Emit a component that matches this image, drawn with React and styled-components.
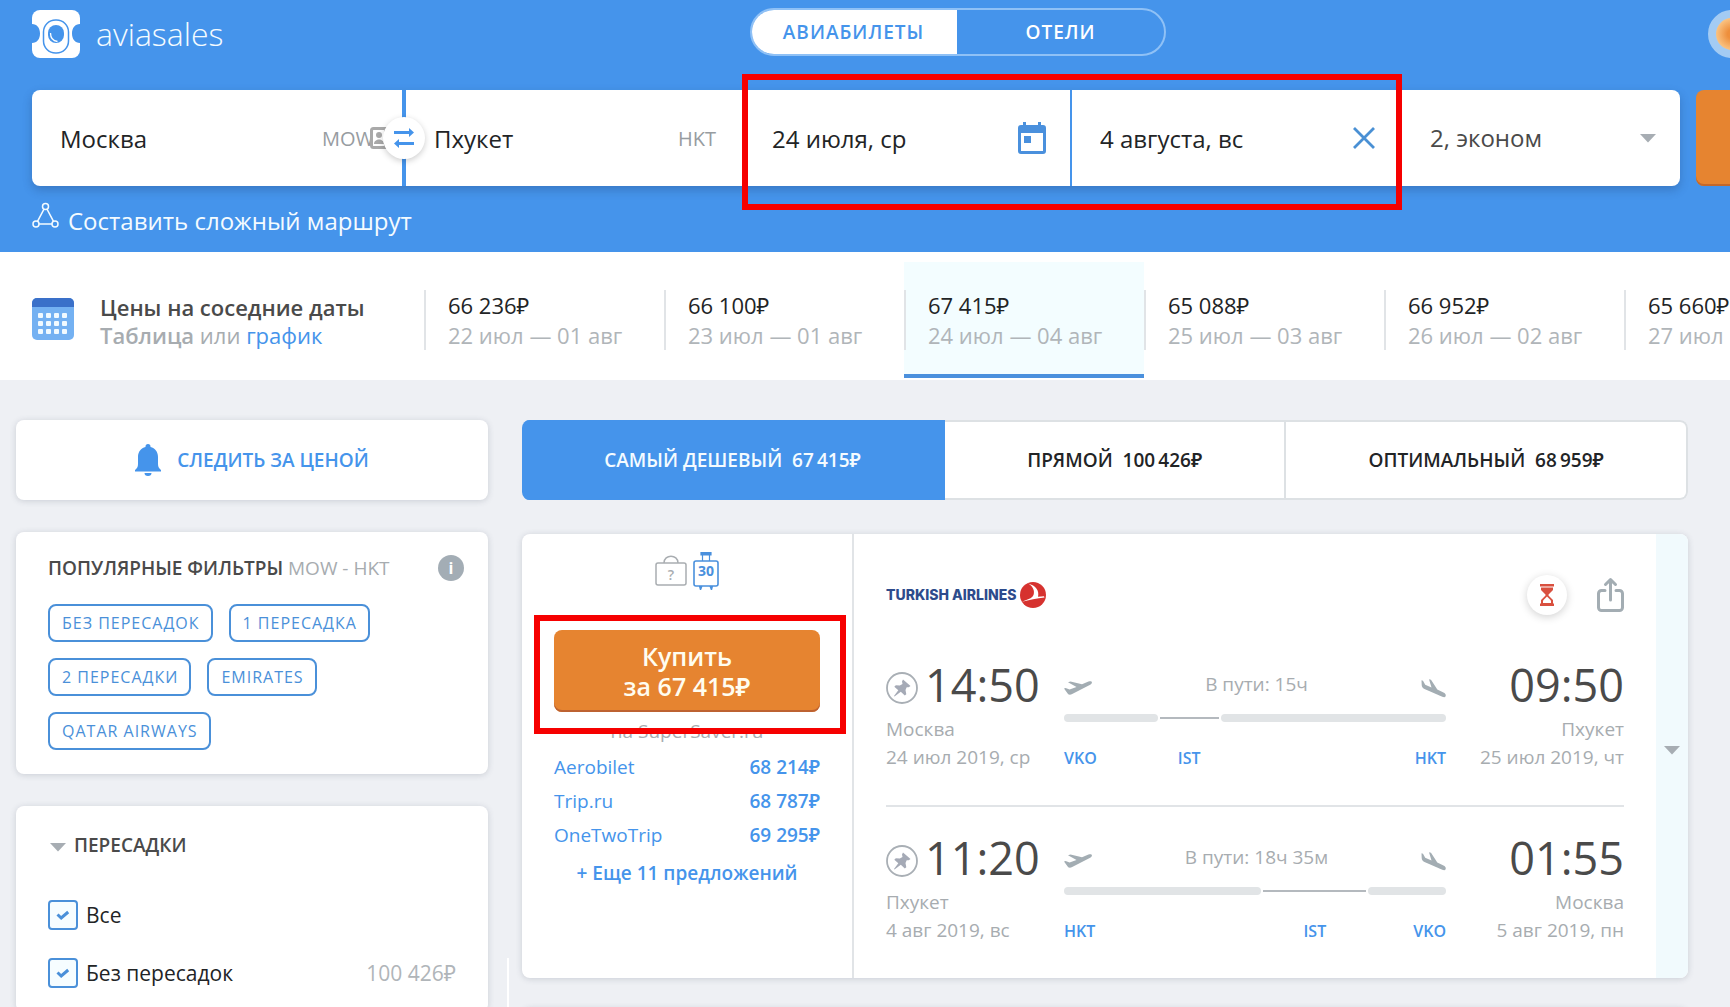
import React from "react";
import styled, { createGlobalStyle, css } from "styled-components";

const blue = "#4594eb";
const ink = "#222426";
const dark = "#4a4a4a";
const grey = "#a7acb0";
const line = "#e1e4e7";
const orange = "#e68430";
const cardShadow = "0 1px 6px rgba(60, 70, 90, 0.2)";

const GlobalStyle = createGlobalStyle`
  *, *::before, *::after { box-sizing: border-box; }
  body {
    margin: 0;
    overflow-x: hidden;
    background: #eef0f4;
    color: ${ink};
    font-family: "Open Sans", "Noto Sans", sans-serif;
    font-size: 19px;
  }
  button, input, select { font: inherit; color: inherit; }
  button { border: 0; padding: 0; background: none; cursor: pointer; }
  a { color: ${blue}; text-decoration: none; }
  h2, p, ul { margin: 0; padding: 0; }
`;

const Page = styled.div`
  overflow: hidden;
  height: 100vh;
`;

/* ---------- header ---------- */

const Header = styled.header`
  background: ${blue};
  padding-bottom: 12px;
`;

const HeaderInner = styled.div`
  width: calc(100% + 186px);
  padding: 0 32px;
`;

const TopBar = styled.div`
  display: grid;
  grid-template-columns: 1fr 416px 1fr;
  align-items: start;
  height: 90px;
  padding-top: 8px;
`;

const Logo = styled.a`
  display: flex;
  align-items: center;
  gap: 16px;
  padding-top: 2px;
  color: #f4fbff;
  font-size: 32px;
  line-height: 48px;
  font-weight: 300;
`;

const ServiceTabs = styled.nav`
  display: flex;
  height: 48px;
  border: 2px solid #8fc1f6;
  border-radius: 24px;
  overflow: hidden;
`;

const ServiceTab = styled.button`
  flex: 1;
  font-size: 19px;
  font-weight: 600;
  letter-spacing: 1px;
  color: ${(p) => (p.$active ? blue : "#fff")};
  background: ${(p) => (p.$active ? "#fff" : "transparent")};
  ${(p) => p.$active && css`margin: -2px 0 -2px -2px;`}
`;

const Avatar = styled.button`
  justify-self: end;
  width: 48px;
  height: 48px;
  margin: 2px 128px 0 0;
  border: 8px solid #a3cbf3;
  border-radius: 50%;
  background: radial-gradient(circle, #ee8f3c 20%, #fbc889 75%);
`;

const SearchForm = styled.form`
  display: flex;
  gap: 16px;
`;

const SearchBar = styled.div`
  flex: 1;
  display: grid;
  grid-template-columns: 370fr 342fr 656fr 280fr;
  height: 96px;
  background: #fff;
  border-radius: 8px;
  box-shadow: 0 4px 10px rgba(30, 60, 110, 0.3);
`;

const Field = styled.div`
  position: relative;
  display: flex;
  align-items: center;
  min-width: 0;
  padding: 0 ${(p) => (p.$icon ? 24 : 28)}px 0 28px;
  border-left: ${(p) => p.$rule || 0}px solid ${blue};
`;

const FieldInput = styled.input`
  flex: 1;
  min-width: 0;
  padding: 2px 0 0;
  border: 0;
  outline: 0;
  background: none;
  font-size: 24px;
  line-height: 40px;
`;

const PaxSelect = styled.select`
  flex: 1;
  padding: 0 2px;
  border: 0;
  appearance: none;
  background: none;
  font-size: 24px;
  line-height: 40px;
  color: ${dark};
`;

const FieldCode = styled.span`
  color: #979ca1;
  font-size: 20px;
`;

const ContactBadge = styled.svg`
  position: absolute;
  right: 12px;
  top: 37px;
`;

const SwapButton = styled.button`
  position: absolute;
  left: -23px;
  top: 27px;
  z-index: 1;
  display: grid;
  place-items: center;
  width: 42px;
  height: 42px;
  border-radius: 50%;
  background: #fff;
  box-shadow: 0 2px 6px rgba(0, 0, 0, 0.2);
`;

const IconButton = styled.button`
  display: flex;
`;

const DateGroup = styled.div`
  position: relative;
  display: grid;
  grid-template-columns: 326fr 330fr;
`;

const Highlight = styled.div`
  position: absolute;
  inset: ${(p) => p.$inset};
  z-index: 2;
  border: 6px solid #f60000;
  pointer-events: none;
`;

const SearchButton = styled.button`
  width: 188px;
  height: 96px;
  border-radius: 8px;
  background: ${orange};
  box-shadow: inset 0 -2px 0 #c4682a;
  color: #fff;
`;

const RouteLink = styled.a`
  display: inline-flex;
  align-items: center;
  gap: 9px;
  margin-top: 16px;
  color: #f4fbff;
  font-size: 24px;
  line-height: 38px;

  svg { margin-bottom: 11px; }
`;

/* ---------- neighbouring dates ---------- */

const PriceStrip = styled.section`
  display: flex;
  height: 128px;
  padding: 10px 0 2px;
  background: #fff;
  overflow: hidden;
`;

const StripIntro = styled.div`
  flex: none;
  display: flex;
  gap: 26px;
  width: 424px;
  padding: 31px 0 0 32px;
  line-height: 28px;
  font-size: 22px;
  color: ${grey};

  svg { margin-top: 5px; }
`;

const StripTitle = styled.h2`
  font-size: 22px;
  line-height: 28px;
  font-weight: 600;
  color: ${dark};
`;

const Chosen = styled.span`
  font-weight: 600;
`;

const DayPrice = styled.button`
  flex: none;
  width: 240px;
  height: 116px;
  padding: 28px 0 24px;
  text-align: left;
  background: ${(p) => (p.$active ? "#f3fdff" : "transparent")};
  border-bottom: 4px solid ${(p) => (p.$active ? "#4a90dd" : "transparent")};
`;

const DayPriceText = styled.span`
  display: block;
  padding-left: 22px;
  border-left: 2px solid ${line};
  font-size: 22px;
  line-height: 30px;
`;

const DayRange = styled.span`
  display: block;
  color: #b0b5b9;
`;

/* ---------- body layout ---------- */

const Content = styled.div`
  display: grid;
  grid-template-columns: 472px minmax(0, 1fr);
  gap: 34px;
  padding: 40px 42px 0 16px;
`;

const Column = styled.div`
  position: relative;
`;

const GutterRule = styled.div`
  position: absolute;
  left: -15px;
  top: 538px;
  width: 2px;
  height: 60px;
  background: #fff;
`;

/* ---------- sidebar ---------- */

const WatchButton = styled.button`
  display: flex;
  align-items: center;
  justify-content: center;
  gap: 16px;
  width: 100%;
  height: 80px;
  background: #fff;
  border-radius: 8px;
  box-shadow: ${cardShadow};
  color: ${blue};
  font-size: 19px;
  font-weight: 600;
`;

const SideCard = styled.section`
  margin-top: 32px;
  padding: 20px 32px 24px;
  background: #fff;
  border-radius: 8px;
  box-shadow: ${cardShadow};
`;

const SideHead = styled.div`
  display: flex;
  align-items: center;
  gap: 8px;
  height: ${(p) => (p.$collapsible ? 38 : 32)}px;
  padding-left: ${(p) => (p.$collapsible ? 2 : 0)}px;

  svg { margin-top: 4px; }
`;

const SideTitle = styled.h2`
  flex: 1;
  font-size: 19px;
  font-weight: 600;
  color: ${dark};
`;

const Muted = styled.span`
  color: ${grey};
  font-weight: 400;
`;

const InfoButton = styled.button`
  width: 26px;
  height: 26px;
  margin-right: -8px;
  border-radius: 50%;
  background: #a3adb5;
  color: #fff;
  font-size: 16px;
  line-height: 26px;
  font-weight: 700;
`;

const Chips = styled.div`
  display: flex;
  flex-wrap: wrap;
  gap: 16px;
  margin-top: 20px;
`;

const Chip = styled.button`
  height: 38px;
  padding: 0 11px 0 12px;
  border: 2px solid #4a90d9;
  border-radius: 8px;
  color: #4a90d9;
  font-size: 16px;
  letter-spacing: 1px;
`;

const CheckRow = styled.label`
  display: flex;
  align-items: center;
  gap: 8px;
  height: 30px;
  margin-top: ${(p) => (p.$first ? 36 : 28)}px;
  font-size: 21px;
`;

const CheckBox = styled.span`
  display: grid;
  place-items: center;

  > * { grid-area: 1 / 1; }
  > svg { pointer-events: none; visibility: hidden; }
  > input:checked + svg { visibility: visible; }
`;

const CheckInput = styled.input`
  appearance: none;
  width: 30px;
  height: 30px;
  margin: 0;
  border: 2px solid #4a90d9;
  border-radius: 4px;
  background: #f6fdff;
`;

const CheckPrice = styled.span`
  margin-left: auto;
  color: #b0b5b9;
`;

/* ---------- sorting tabs ---------- */

const SortTabs = styled.div`
  display: flex;
  height: 80px;
  border-radius: 8px;
  overflow: hidden;
`;

const SortTab = styled.button`
  flex: 1 1 auto;
  padding: 0 16px;
  font-size: 19px;
  font-weight: 600;
  background: #fff;
  border: 2px solid #dde1e4;
  border-left-width: 0;

  &:last-child { border-radius: 0 8px 8px 0; }
  ${(p) => p.$active && css`
    background: ${blue};
    border-color: ${blue};
    color: #f4fbff;
  `}
`;

/* ---------- ticket ---------- */

const Ticket = styled.article`
  display: grid;
  grid-template-columns: 332px minmax(0, 1fr) 32px;
  margin-top: 34px;
  background: #fff;
  border-radius: 8px;
  box-shadow: ${cardShadow};
`;

const BuyColumn = styled.div`
  padding: 0 32px;
  border-right: 2px solid ${line};
`;

const Baggage = styled.div`
  display: flex;
  align-items: center;
  justify-content: center;
  gap: 6px;
  height: 96px;
  padding-bottom: 22px;
`;

const BuyWrap = styled.div`
  position: relative;
`;

const BuyButton = styled.button`
  display: block;
  width: 100%;
  height: 82px;
  border-radius: 8px;
  background: ${orange};
  box-shadow: inset 0 -2px 0 #bd6231;
  color: #fffdf0;
  font-size: 25px;
  line-height: 30px;
  font-weight: 600;
`;

const Agent = styled.p`
  margin: 5px 0;
  line-height: 28px;
  text-align: center;
  color: ${grey};
`;

const Offer = styled.a`
  display: flex;
  justify-content: space-between;
  line-height: 34px;
`;

const OfferPrice = styled.span`
  font-weight: 600;
`;

const MoreOffers = styled.button`
  display: block;
  width: 100%;
  margin-top: 4px;
  line-height: 34px;
  font-weight: 600;
  color: ${blue};
`;

const Flight = styled.div`
  padding: 0 32px;
`;

const FlightHead = styled.div`
  display: flex;
  align-items: center;
  height: 121px;
  gap: 30px;
`;

const Airline = styled.span`
  display: flex;
  align-items: center;
  gap: 3px;
  margin-right: auto;
  font-family: Inter, "Open Sans", sans-serif;
  font-size: 14px;
  font-weight: 800;
  color: #2d4b8c;
`;

const RoundButton = styled.button`
  display: grid;
  place-items: center;
  width: 40px;
  height: 40px;
  border-radius: 50%;
  background: #fff;
  box-shadow: 0 2px 8px rgba(0, 0, 0, 0.18);
`;

const Leg = styled.div`
  display: grid;
  grid-template-columns: 178px minmax(0, 1fr) 178px;
  padding-bottom: 33px;

  & + & {
    padding-top: 21px;
    border-top: 2px solid ${line};
  }
`;

const Stop = styled.div`
  text-align: ${(p) => (p.$end ? "right" : "left")};
  line-height: 28px;
  color: ${grey};
`;

const StopTime = styled.div`
  display: flex;
  align-items: center;
  gap: 7px;
  justify-content: ${(p) => (p.$end ? "flex-end" : "flex-start")};
  font-size: 45px;
  line-height: 60px;
  color: ${dark};

  svg { margin-top: 6px; }
`;

const Route = styled.div`
  padding-top: 15px;
`;

const RouteHead = styled.div`
  display: flex;
  align-items: center;
  justify-content: space-between;
  line-height: 28px;
  color: ${grey};

  svg { margin-top: 7px; }
`;

const Track = styled.div`
  display: grid;
  column-gap: 2px;
  align-items: center;
  margin-top: 16px;
`;

const Hop = styled.span`
  height: 8px;
  border-radius: 4px;
  background: #e1e4e6;
`;

const Layover = styled.span`
  height: 2px;
  background: #b4b9be;
`;

const Code = styled.a`
  margin-top: 22px;
  justify-self: ${(p) => p.$at};
  font-size: 16px;
  line-height: 28px;
  font-weight: 600;
`;

const Expand = styled.button`
  display: grid;
  place-items: center;
  padding-bottom: 12px;
  border-radius: 0 8px 8px 0;
  background: #f1fafd;
`;

const NextTicket = styled.div`
  height: 60px;
  margin-top: 30px;
  background: #fff;
  border-radius: 8px;
  box-shadow: ${cardShadow};
`;

/* ---------- drawings ---------- */

const Caret = () => (
  <svg width="16" height="9" viewBox="0 0 16 9" aria-hidden="true">
    <path d="M0 0h16L8 8.5z" fill="#a7adb3" />
  </svg>
);

const LogoMark = () => (
  <svg width="48" height="48" viewBox="0 0 48 48" aria-hidden="true">
    <rect width="48" height="48" rx="8" fill="#fff" />
    <path d="M0 14c5 0 8 4 8 9.500S5 33 0 33zM48 14c-5 0-8 4-8 9.500s3 9.500 8 9.500z" fill={blue} />
    <rect x="11.500" y="10" width="25" height="33" rx="12" fill="#fff" stroke={blue} strokeWidth="1.500" />
    <rect x="16" y="15" width="16" height="18" rx="8" fill={blue} />
    <path d="M18.500 23c0 5 3 8 7 8.500" fill="none" stroke="#fff" strokeWidth="1.300" />
  </svg>
);

const RouteIcon = () => (
  <svg width="27" height="27" viewBox="0 0 27 27" fill="none" stroke="#f4fbff" strokeWidth="1.500" aria-hidden="true">
    <circle cx="13.500" cy="4.500" r="3" />
    <circle cx="4" cy="22" r="3" />
    <circle cx="23" cy="22" r="3" />
    <path d="M12 7.200L5.500 19.400M15 7.200l6.500 12.200M7 22h13" />
  </svg>
);

const SwapIcon = () => (
  <svg width="20" height="22" viewBox="0 0 20 22" aria-hidden="true">
    <path d="M0 4h15V1l5 4.500L15 10V7H0zM20 15H5v-3l-5 4.500L5 21v-3h15z" fill={blue} />
  </svg>
);

const CalendarIcon = () => (
  <svg width="28" height="32" viewBox="0 0 28 32" aria-hidden="true">
    <path d="M5 0h3v3h12V0h3v3h2a3 3 0 0 1 3 3v23a3 3 0 0 1-3 3H3a3 3 0 0 1-3-3V6a3 3 0 0 1 3-3h2zM3 11v18h22V11z" fill="#4a90dd" />
    <rect x="6" y="14" width="7" height="7" fill="#4a90dd" />
  </svg>
);

const CloseIcon = () => (
  <svg width="24" height="24" viewBox="0 0 24 24" aria-hidden="true">
    <path d="M2 2l20 20M22 2L2 22" stroke="#4a90d4" strokeWidth="2.800" />
  </svg>
);

const PriceCalendar = () => (
  <svg width="42" height="42" viewBox="0 0 42 42" aria-hidden="true">
    <rect width="42" height="42" rx="5" fill="#74b1f2" />
    <path d="M0 9V5a5 5 0 0 1 5-5h32a5 5 0 0 1 5 5v4z" fill="#3a70c9" />
    {[15, 23, 31].map((y) =>
      [6, 14, 22, 30].map((x) => <rect key={x + "-" + y} x={x} y={y} width="5" height="5" rx="1" fill="#f1faff" />)
    )}
  </svg>
);

const BellIcon = () => (
  <svg width="26" height="33" viewBox="0 0 26 33" fill={blue} aria-hidden="true">
    <path d="M13 0a2.500 2.500 0 0 1 2.500 2.500v.6C20 4.200 23 8 23 13v7c0 3 1 4.500 3 6v1.500H0V26c2-1.500 3-3 3-6v-7C3 8 6 4.200 10.500 3.100v-.6A2.500 2.500 0 0 1 13 0zM9.500 29h7a3.500 3 0 0 1-7 0z" />
  </svg>
);

const CheckIcon = () => (
  <svg width="14" height="10" viewBox="0 0 14 10" aria-hidden="true">
    <path d="M1.500 4.500L5.200 8l7-6" fill="none" stroke="#4a90d9" strokeWidth="3" />
  </svg>
);

const BagIcon = () => (
  <svg width="32" height="32" viewBox="0 0 32 32" aria-hidden="true">
    <rect x="1" y="8" width="30" height="22" rx="2" fill="none" stroke="#a9adb1" strokeWidth="1.500" />
    <path d="M9 8c0-9 14-9 14 0" fill="none" stroke="#a9adb1" strokeWidth="1.500" />
    <text x="16" y="24.500" textAnchor="middle" fontSize="14" fontWeight="600" fill="#a9adb1">?</text>
  </svg>
);

const SuitcaseIcon = () => (
  <svg width="26" height="38" viewBox="0 0 26 38" aria-hidden="true">
    <rect x="1" y="9" width="24" height="25" rx="2" fill="none" stroke="#4a90dd" strokeWidth="1.600" />
    <path d="M8 0h10v3H8zM9.500 3v6M16.500 3v6M6.500 34l1 4 1.500-4M17 34l1.500 4 1-4" fill="#4a90dd" stroke="#4a90dd" strokeWidth="1.200" />
    <text x="13" y="24" textAnchor="middle" fontSize="14" fontWeight="700" fill="#4a90dd">30</text>
  </svg>
);

const TurkishMark = () => (
  <svg width="26" height="26" viewBox="0 0 26 26" aria-hidden="true">
    <circle cx="13" cy="13" r="13" fill="#d6322f" />
    <path d="M8 1.500C13 4 15 9 13.500 13c-1 2.500-4 4-8.500 5.500l-3 1.200C9 18 17 16.500 24.500 15.500l-.5-1.300-6 .6C19.500 9 16 3.500 8 1.500z" fill="#fff" />
  </svg>
);

const HourglassIcon = () => (
  <svg width="14" height="22" viewBox="0 0 14 22" aria-hidden="true">
    <path d="M0 0h14v2.500H0zM1 3.500h12V6L8.500 10.500v1L13 16v4H1v-4l4.500-4.500v-1L1 6z" fill="#d9503f" />
    <path d="M7 12.500l-4 4V19h8v-2.500z" fill="#fff" />
    <path d="M0 19.500h14V22H0z" fill="#d9503f" />
  </svg>
);

const ShareIcon = () => (
  <svg width="27" height="36" viewBox="0 0 27 36" fill="none" stroke="#a3adb3" strokeWidth="3" strokeLinecap="round" strokeLinejoin="round" aria-hidden="true">
    <path d="M8 13.500H4.500a3 3 0 0 0-3 3v14a3 3 0 0 0 3 3h18a3 3 0 0 0 3-3v-14a3 3 0 0 0-3-3H19M13.500 23V2.500M8.500 7.500l5-5 5 5" />
  </svg>
);

const PinIcon = () => (
  <svg width="32" height="32" viewBox="0 0 32 32" aria-hidden="true">
    <circle cx="16" cy="16" r="15" fill="none" stroke="#a9afb5" strokeWidth="1.800" />
    <path d="M17 7.500l7.500 6.500-1.800 1.200-2 0-1.200 2.800.8 4.200-1.500 1.300-4-3.700L8.500 24.500 8 24l4.300-5.800-4-3.400 1.500-1.600 4 .4 2.700-1.700-.5-2.400z" fill="#a5aab6" />
  </svg>
);

const TakeOff = () => (
  <svg width="28" height="14" viewBox="0 0 28 14" aria-hidden="true">
    <path d="M0 7.500l1.600-.5 4 1.500L12.500 6 4 1.200 6.500.4 18 3.200 24.500.6c1.500-.6 3.200-.6 3.400.6.200 1.200-.6 2-2.200 2.800L8.200 13c-1.500.8-3 .8-4 .2z" fill="#a3adb3" />
  </svg>
);

const Landing = () => (
  <svg width="25" height="20" viewBox="0 0 25 20" aria-hidden="true">
    <path d="M.5 1.200l1.500.5 2.200 4L10.500 8.500 8 .3l2 .4 6.300 9.800 6.700 3.300c1.500.8 2.100 2.200 1.600 3.400-.5 1.200-1.700 1.200-3.300.5L3.500 10C1.500 9 .8 7.800.7 6z" transform="translate(0 1)" fill="#a3adb3" />
  </svg>
);

/* ---------- data ---------- */

const dayPrices = [
  ["66\u00a0236₽", "22 июл — 01 авг"],
  ["66\u00a0100₽", "23 июл — 01 авг"],
  ["67\u00a0415₽", "24 июл — 04 авг"],
  ["65\u00a0088₽", "25 июл — 03 авг"],
  ["66\u00a0952₽", "26 июл — 02 авг"],
  ["65\u00a0660₽", "27 июл"],
];

const chips = ["БЕЗ ПЕРЕСАДОК", "1 ПЕРЕСАДКА", "2 ПЕРЕСАДКИ", "EMIRATES", "QATAR AIRWAYS"];

const sortTabs = [
  "САМЫЙ ДЕШЕВЫЙ\u00a0 67\u2009415₽",
  "ПРЯМОЙ\u00a0 100\u2009426₽",
  "ОПТИМАЛЬНЫЙ\u00a0 68\u2009959₽",
];

const offers = [
  ["Aerobilet", "68\u00a0214₽"],
  ["Trip.ru", "68\u00a0787₽"],
  ["OneTwoTrip", "69\u00a0295₽"],
];

const legs = [
  {
    from: ["14:50", "Москва", "24 июл 2019, ср"],
    to: ["09:50", "Пхукет", "25 июл 2019, чт"],
    time: "В пути: 15ч",
    parts: [94, 59, 226],
    codes: ["VKO", "IST", "HKT"],
  },
  {
    from: ["11:20", "Пхукет", "4 авг 2019, вс"],
    to: ["01:55", "Москва", "5 авг 2019, пн"],
    time: "В пути: 18ч 35м",
    parts: [198, 103, 78],
    codes: ["HKT", "IST", "VKO"],
  },
];

function FlightLeg({ leg }) {
  return (
    <Leg>
      <Stop>
        <StopTime><PinIcon />{leg.from[0]}</StopTime>
        <div>{leg.from[1]}</div>
        <div>{leg.from[2]}</div>
      </Stop>
      <Route>
        <RouteHead><TakeOff /><span>{leg.time}</span><Landing /></RouteHead>
        <Track style={{ gridTemplateColumns: leg.parts.map((n) => `${n}fr`).join(" ") }}>
          <Hop /><Layover /><Hop />
          <Code href="#" $at="start">{leg.codes[0]}</Code>
          <Code href="#" $at="center">{leg.codes[1]}</Code>
          <Code href="#" $at="end">{leg.codes[2]}</Code>
        </Track>
      </Route>
      <Stop $end>
        <StopTime $end>{leg.to[0]}</StopTime>
        <div>{leg.to[1]}</div>
        <div>{leg.to[2]}</div>
      </Stop>
    </Leg>
  );
}

export default function App() {
  return (
    <Page>
      <GlobalStyle />
      <Header>
        <HeaderInner>
          <TopBar>
            <Logo href="#"><LogoMark />aviasales</Logo>
            <ServiceTabs>
              <ServiceTab $active>АВИАБИЛЕТЫ</ServiceTab>
              <ServiceTab>ОТЕЛИ</ServiceTab>
            </ServiceTabs>
            <Avatar aria-label="Профиль" />
          </TopBar>
          <SearchForm onSubmit={(e) => e.preventDefault()}>
            <SearchBar>
              <Field>
                <FieldInput aria-label="Откуда" defaultValue="Москва" />
                <FieldCode>MOW</FieldCode>
                <ContactBadge width="20" height="22" viewBox="0 0 20 22" aria-hidden="true">
                  <rect x="1.500" y="1.500" width="17" height="19" rx="2" fill="#fff" stroke="#a9a9a9" strokeWidth="3" />
                  <circle cx="9" cy="8" r="3" fill="#a9a9a9" />
                  <path d="M4 17c0-6 10-6 10 0zM14 2h4v18h-4z" fill="#a9a9a9" />
                </ContactBadge>
              </Field>
              <Field $rule={4}>
                <SwapButton type="button" aria-label="Поменять местами"><SwapIcon /></SwapButton>
                <FieldInput aria-label="Куда" defaultValue="Пхукет" />
                <FieldCode>HKT</FieldCode>
              </Field>
              <DateGroup>
                <Field $icon>
                  <FieldInput aria-label="Туда" defaultValue="24 июля, ср" />
                  <IconButton type="button" aria-label="Календарь"><CalendarIcon /></IconButton>
                </Field>
                <Field $icon $rule={2}>
                  <FieldInput aria-label="Обратно" defaultValue="4 августа, вс" />
                  <IconButton type="button" aria-label="Очистить"><CloseIcon /></IconButton>
                </Field>
                <Highlight $inset="-16px -2px -24px" />
              </DateGroup>
              <Field $icon>
                <PaxSelect aria-label="Пассажиры и класс"><option>2, эконом</option></PaxSelect>
                <Caret />
              </Field>
            </SearchBar>
            <SearchButton aria-label="Найти" />
          </SearchForm>
          <RouteLink href="#"><RouteIcon />Составить сложный маршрут</RouteLink>
        </HeaderInner>
      </Header>

      <PriceStrip>
        <StripIntro>
          <PriceCalendar />
          <div>
            <StripTitle>Цены на соседние даты</StripTitle>
            <Chosen>Таблица</Chosen> или <a href="#">график</a>
          </div>
        </StripIntro>
        {dayPrices.map(([price, range], i) => (
          <DayPrice key={range} $active={i === 2}>
            <DayPriceText>{price}<DayRange>{range}</DayRange></DayPriceText>
          </DayPrice>
        ))}
      </PriceStrip>

      <Content>
        <Column as="aside">
          <WatchButton><BellIcon />СЛЕДИТЬ ЗА ЦЕНОЙ</WatchButton>
          <SideCard>
            <SideHead>
              <SideTitle>ПОПУЛЯРНЫЕ ФИЛЬТРЫ <Muted>MOW - HKT</Muted></SideTitle>
              <InfoButton>i</InfoButton>
            </SideHead>
            <Chips>{chips.map((c) => <Chip key={c}>{c}</Chip>)}</Chips>
          </SideCard>
          <SideCard>
            <SideHead $collapsible><Caret /><SideTitle>ПЕРЕСАДКИ</SideTitle></SideHead>
            <CheckRow $first>
              <CheckBox><CheckInput type="checkbox" defaultChecked /><CheckIcon /></CheckBox>
              Все
            </CheckRow>
            <CheckRow>
              <CheckBox><CheckInput type="checkbox" defaultChecked /><CheckIcon /></CheckBox>
              Без пересадок
              <CheckPrice>{"100\u00a0426₽"}</CheckPrice>
            </CheckRow>
          </SideCard>
        </Column>

        <Column as="main">
          <GutterRule />
          <SortTabs>
            {sortTabs.map((t, i) => <SortTab key={t} $active={i === 0}>{t}</SortTab>)}
          </SortTabs>
          <Ticket>
            <BuyColumn>
              <Baggage><BagIcon /><SuitcaseIcon /></Baggage>
              <BuyWrap>
                <BuyButton>Купить<br />{"за 67\u00a0415₽"}</BuyButton>
                <Highlight $inset="-15px -26px -22px -20px" />
              </BuyWrap>
              <Agent>на SuperSaver.ru</Agent>
              {offers.map(([name, price]) => (
                <Offer href="#" key={name}>{name}<OfferPrice>{price}</OfferPrice></Offer>
              ))}
              <MoreOffers>+ Еще 11 предложений</MoreOffers>
            </BuyColumn>
            <Flight>
              <FlightHead>
                <Airline>TURKISH AIRLINES<TurkishMark /></Airline>
                <RoundButton aria-label="Осталось мало времени"><HourglassIcon /></RoundButton>
                <IconButton aria-label="Поделиться"><ShareIcon /></IconButton>
              </FlightHead>
              {legs.map((leg) => <FlightLeg key={leg.time} leg={leg} />)}
            </Flight>
            <Expand aria-label="Подробнее"><Caret /></Expand>
          </Ticket>
          <NextTicket />
        </Column>
      </Content>
    </Page>
  );
}
